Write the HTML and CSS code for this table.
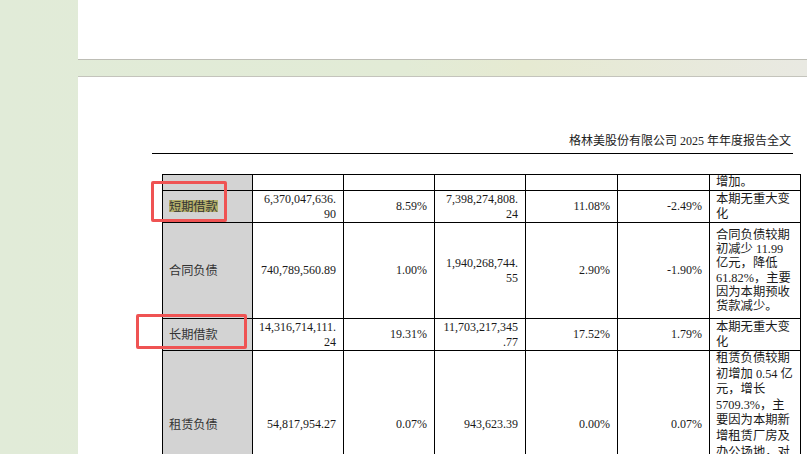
FILE: index.html
```html
<!DOCTYPE html>
<html lang="zh-CN">
<head>
<meta charset="utf-8">
<title>格林美股份有限公司 2025 年年度报告全文</title>
<link rel="stylesheet" href="styles.css">
</head>
<body>
<div class="viewer">
  <div class="page page-prev"></div>
  <div class="page page-cur">
    <div class="running-head">格林美股份有限公司 2025 年年度报告全文</div>
    <table class="report">
      <colgroup>
        <col class="c1"><col class="c2"><col class="c3"><col class="c4"><col class="c5"><col class="c6"><col class="c7">
      </colgroup>
      <tr class="r1">
        <td class="name"></td><td></td><td></td><td></td><td></td><td></td>
        <td class="note">增加。</td>
      </tr>
      <tr class="r2">
        <td class="name"><span class="hl">短期借款</span></td>
        <td class="num">6,370,047,636.<br>90</td>
        <td class="num">8.59%</td>
        <td class="num">7,398,274,808.<br>24</td>
        <td class="num">11.08%</td>
        <td class="num">-2.49%</td>
        <td class="note">本期无重大变<br>化</td>
      </tr>
      <tr class="r3">
        <td class="name">合同负债</td>
        <td class="num">740,789,560.89</td>
        <td class="num">1.00%</td>
        <td class="num">1,940,268,744.<br>55</td>
        <td class="num">2.90%</td>
        <td class="num">-1.90%</td>
        <td class="note">合同负债较期<br>初减少 11.99<br>亿元，降低<br>61.82%，主要<br>因为本期预收<br>货款减少。</td>
      </tr>
      <tr class="r4">
        <td class="name">长期借款</td>
        <td class="num">14,316,714,111.<br>24</td>
        <td class="num">19.31%</td>
        <td class="num">11,703,217,345<br>.77</td>
        <td class="num">17.52%</td>
        <td class="num">1.79%</td>
        <td class="note">本期无重大变<br>化</td>
      </tr>
      <tr class="r5">
        <td class="name">租赁负债</td>
        <td class="num">54,817,954.27</td>
        <td class="num">0.07%</td>
        <td class="num">943,623.39</td>
        <td class="num">0.00%</td>
        <td class="num">0.07%</td>
        <td class="note note-long">租赁负债较期<br>初增加 0.54 亿<br>元，增长<br>5709.3%，主<br>要因为本期新<br>增租赁厂房及<br>办公场地，对<br>应租赁负债增<br>加。</td>
      </tr>
    </table>
  </div>
  <div class="mark mark-1"></div>
  <div class="mark mark-2"></div>
</div>
</body>
</html>
```
FILE: styles.css
```css
html, body {
  margin: 0;
  padding: 0;
}
body {
  width: 807px;
  height: 454px;
  overflow: hidden;
  background: #e1ebd8;
  font-family: "Liberation Serif", "Noto Sans CJK SC", serif;
  color: #1a1a1a;
}
.viewer {
  position: relative;
  padding-left: 78px;
  background: linear-gradient(90deg, #e1ebd8 0%, #e2ebd6 50%, #e6ead2 65%, #e9e9e2 100%);
}
.page {
  width: 780px;
  background: #ffffff;
}
.page-prev {
  height: 59px;
  border-bottom: 1px solid #bdbdb5;
}
.page-cur {
  margin-top: 16px;
  border-top: 1px solid #c4c4bc;
  padding: 57px 0 0 74px;
  height: 400px;
  box-sizing: border-box;
}
.running-head {
  width: 641px;
  box-sizing: border-box;
  text-align: right;
  font-size: 12px;
  line-height: 15px;
  padding: 0 2px 4px 0;
  border-bottom: 1px solid #000;
  color: #222;
}
.report {
  margin: 20px 0 0 10px;
  border-collapse: collapse;
  table-layout: fixed;
  width: 638px;
  font-size: 12px;
  line-height: 14.2px;
}
.report td {
  border: 1px solid #000;
  padding: 0 5px;
  vertical-align: middle;
  white-space: nowrap;
  overflow: hidden;
}
.c1 { width: 90px; }
.c2 { width: 91px; }
.c3 { width: 91px; }
.c4 { width: 91px; }
.c5 { width: 92px; }
.c6 { width: 92px; }
.c7 { width: 91px; }
.report td.name {
  background: #d3d3d3;
  padding-left: 6px;
  font-family: "Noto Sans CJK SC", sans-serif;
  font-size: 12.2px;
  color: #333;
}
.report td.num {
  text-align: right;
  padding-right: 7px;
}
.report td.note {
  text-align: left;
  padding-left: 6px;
  font-family: "Liberation Serif", "Noto Sans CJK SC", serif;
  font-size: 12.3px;
  vertical-align: middle;
}
.report td.note-long {
  vertical-align: top;
  line-height: 15.6px;
}
.r1 td { height: 15px; }
.r2 td { height: 31px; }
.r3 td { height: 95px; }
.r4 td { height: 31px; }
.r5 td { height: 146px; }
.hl {
  display: inline-block;
  background: #b5b06c;
  line-height: 12px;
  padding: 0;
}
.mark {
  position: absolute;
  border: 3px solid #ef5353;
  border-radius: 2px;
  box-sizing: border-box;
}
.mark-1 {
  left: 151px;
  top: 181px;
  width: 76px;
  height: 41px;
}
.mark-2 {
  left: 136px;
  top: 314px;
  width: 111px;
  height: 35px;
}
```
